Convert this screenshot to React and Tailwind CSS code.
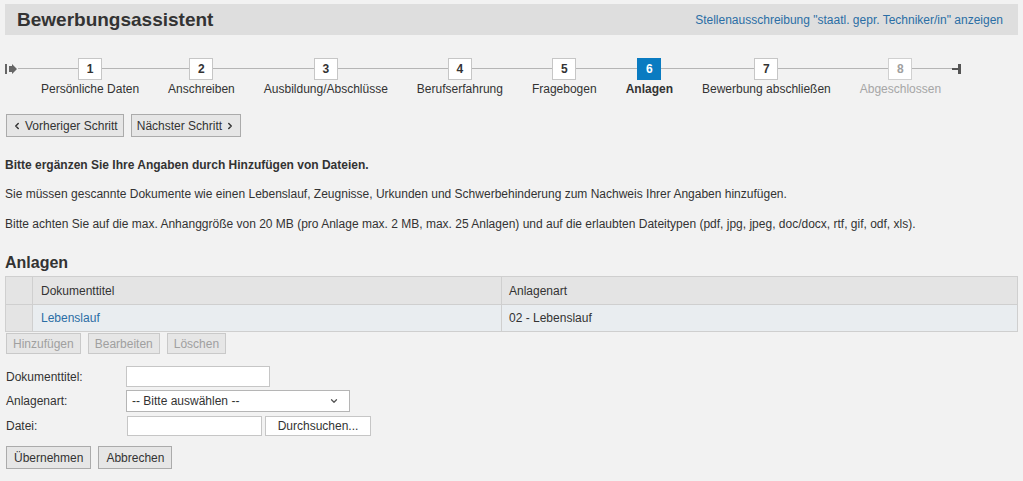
import { ChevronLeft, ChevronRight, ChevronDown } from "lucide-react";

const steps = [
  { n: 1, label: "Persönliche Daten" },
  { n: 2, label: "Anschreiben" },
  { n: 3, label: "Ausbildung/Abschlüsse" },
  { n: 4, label: "Berufserfahrung" },
  { n: 5, label: "Fragebogen" },
  { n: 6, label: "Anlagen", active: true },
  { n: 7, label: "Bewerbung abschließen" },
  { n: 8, label: "Abgeschlossen", disabled: true },
];

function Step({ step }) {
  const box = step.active
    ? "bg-[#0a7bc1] border-[#0a7bc1] text-white"
    : step.disabled
    ? "bg-white border-[#d0d0d0] text-[#a0a0a0]"
    : "bg-white border-[#c6c6c6] text-[#333]";
  const label = step.active
    ? "font-bold text-[#333]"
    : step.disabled
    ? "text-[#a6a6a6]"
    : "text-[#333]";
  return (
    <div className="flex flex-col items-center">
      <div className={`w-6 h-[22px] border flex items-center justify-center text-xs font-bold ${box}`}>{step.n}</div>
      <div className={`mt-[1px] text-xs leading-[16px] whitespace-nowrap ${label}`}>{step.label}</div>
    </div>
  );
}

function GreyButton({ children, className = "" }) {
  return (
    <button className={`h-[23px] border border-[#ababab] bg-[#e6e6e6] text-xs text-[#333] flex items-center gap-[3px] ${className}`}>
      {children}
    </button>
  );
}

export default function App() {
  return (
    <div className="min-h-[481px] bg-[#f2f2f2] text-[#333] px-[5px] pt-1 text-xs" style={{ fontFamily: '"Liberation Sans", Arial, sans-serif' }}>
      {/* header */}
      <div className="h-[31px] bg-[#dedede] flex items-center justify-between pl-3 pr-[15px]">
        <h1 className="text-[19px] font-bold text-[#333]">Bewerbungsassistent</h1>
        <a className="text-xs text-[#2b6ea5]">Stellenausschreibung "staatl. gepr. Techniker/in" anzeigen</a>
      </div>

      {/* steps */}
      <div className="relative mt-[23px] h-[40px]">
        <div className="absolute left-[13px] w-[937px] top-[10px] h-px bg-[#b5b5b5]" />
        <svg className="absolute left-0 top-[6px]" width="12" height="10" viewBox="0 0 12 10">
          <rect x="0" y="0" width="2" height="10" fill="#666" />
          <path d="M4 2h3V0l5 5-5 5V8H4z" fill="#666" />
        </svg>
        <svg className="absolute left-[947px] top-[5px]" width="10" height="12" viewBox="0 0 10 12">
          <rect x="0" y="5" width="7" height="2" fill="#555" />
          <rect x="6" y="1" width="3" height="10" fill="#555" />
        </svg>
        <div className="absolute left-[36px] top-0 flex gap-[29px]">
          {steps.map((s) => (
            <Step key={s.n} step={s} />
          ))}
        </div>
      </div>

      {/* nav buttons */}
      <div className="mt-[16px] flex gap-[7px] ml-px">
        <GreyButton className="px-[5px]">
          <ChevronLeft size={10} strokeWidth={3.5} />
          Vorheriger Schritt
        </GreyButton>
        <GreyButton className="px-[5px]">
          Nächster Schritt
          <ChevronRight size={10} strokeWidth={3.5} />
        </GreyButton>
      </div>

      <p className="mt-[21px] font-bold leading-[14px]">Bitte ergänzen Sie Ihre Angaben durch Hinzufügen von Dateien.</p>
      <p className="mt-[15px] leading-[14px]">Sie müssen gescannte Dokumente wie einen Lebenslauf, Zeugnisse, Urkunden und Schwerbehinderung zum Nachweis Ihrer Angaben hinzufügen.</p>
      <p className="mt-[16px] leading-[14px]">Bitte achten Sie auf die max. Anhanggröße von 20 MB (pro Anlage max. 2 MB, max. 25 Anlagen) und auf die erlaubten Dateitypen (pdf, jpg, jpeg, doc/docx, rtf, gif, odf, xls).</p>

      <h2 className="mt-[23px] text-[16px] font-bold leading-[18px]">Anlagen</h2>

      {/* table */}
      <div className="mt-[4px] border border-[#cfcfcf]">
        <div className="flex h-[28px] bg-[#e4e4e4] border-b border-[#cfcfcf]">
          <div className="w-[27px] border-r border-[#cfcfcf]" />
          <div className="w-[469px] border-r border-[#cfcfcf] flex items-center pl-[8px]">Dokumenttitel</div>
          <div className="flex-1 flex items-center pl-[7px]">Anlagenart</div>
        </div>
        <div className="flex h-[26px] bg-[#e9edf0]">
          <div className="w-[27px] border-r border-[#cfcfcf] bg-[#e4e4e4]" />
          <div className="w-[469px] border-r border-[#cfcfcf] flex items-center pl-[8px] text-[#2b6ea5]">Lebenslauf</div>
          <div className="flex-1 flex items-center pl-[7px]">02 - Lebenslauf</div>
        </div>
      </div>

      <div className="mt-px flex gap-[7px] ml-px">
        {["Hinzufügen", "Bearbeiten", "Löschen"].map((b) => (
          <button key={b} className="h-[21px] px-[6px] border border-[#c9c9c9] bg-[#e6e6e6] text-xs text-[#a0a0a0]">
            {b}
          </button>
        ))}
      </div>

      {/* form */}
      <div className="mt-[12px] ml-px grid grid-cols-[120px_auto] gap-y-[3px] items-center">
        <label>Dokumenttitel:</label>
        <input className="w-[144px] h-[21px] border border-[#c6c6c6] bg-white" />
        <label>Anlagenart:</label>
        <div className="w-[224px] h-[22px] border border-[#b5b5b5] bg-white flex items-center justify-between pl-[5px] pr-[10px] text-xs">
          <span>-- Bitte auswählen --</span>
          <ChevronDown size={10} strokeWidth={3} className="text-[#555]" />
        </div>
        <label>Datei:</label>
        <div className="flex gap-[3px] ml-px mt-[1px]">
          <input className="w-[135px] h-[20px] border border-[#c6c6c6] bg-white" />
          <button className="w-[106px] h-[20px] border border-[#c6c6c6] bg-white text-xs text-[#333]">Durchsuchen...</button>
        </div>
      </div>

      <div className="mt-[10px] flex gap-[7px] ml-px">
        <GreyButton className="h-[22px] px-[7px]">Übernehmen</GreyButton>
        <GreyButton className="h-[22px] px-[7px]">Abbrechen</GreyButton>
      </div>
    </div>
  );
}
